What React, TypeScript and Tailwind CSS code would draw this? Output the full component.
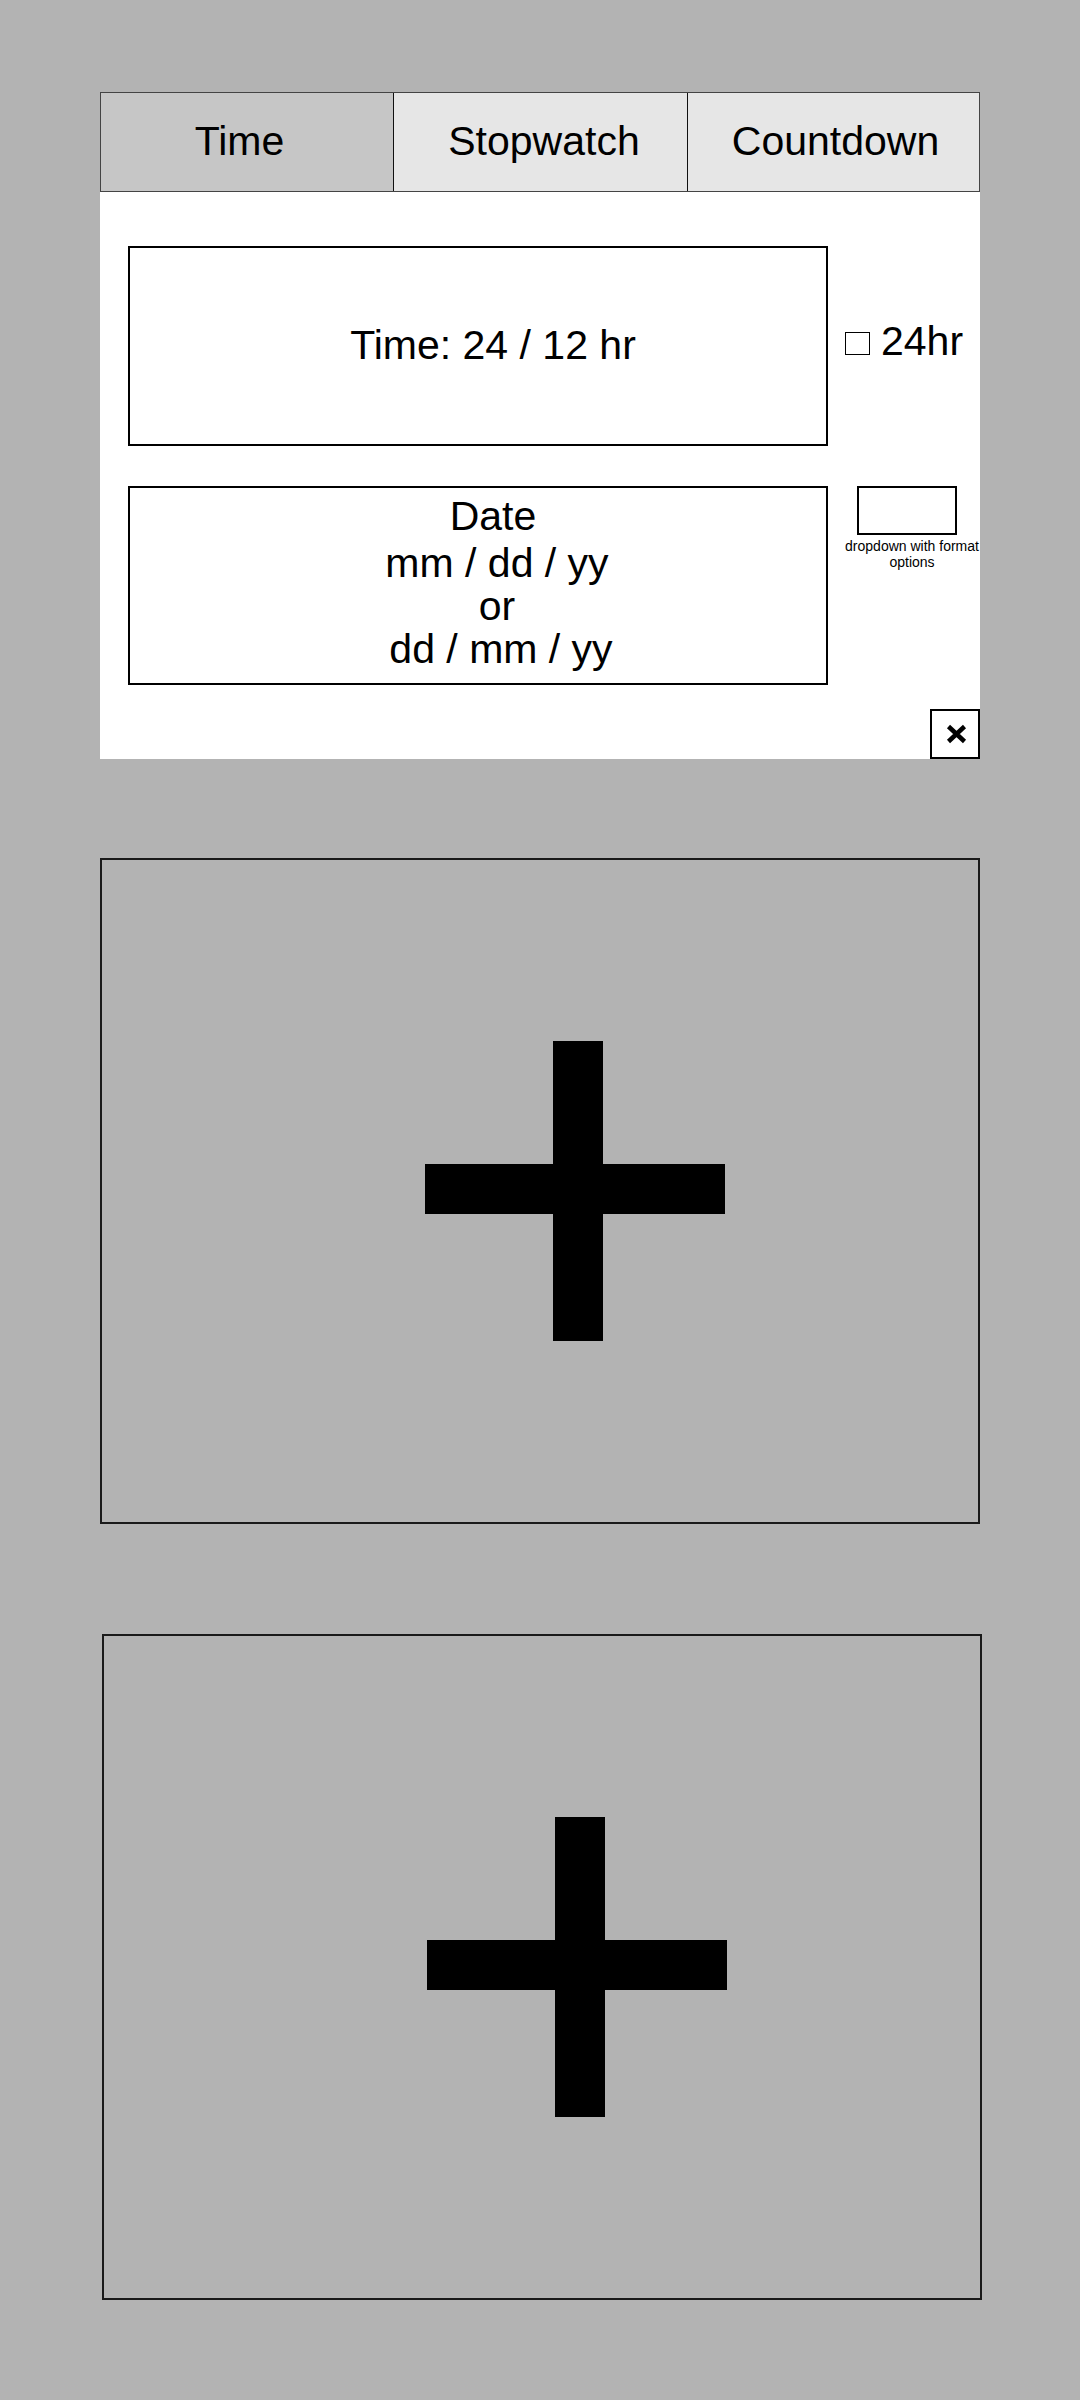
import React from "react";

function Plus() {
  return (
    <svg width="300" height="300" viewBox="0 0 300 300" className="block shrink-0">
      <rect x="128" y="0" width="50" height="300" fill="#000" />
      <rect x="0" y="123" width="300" height="50" fill="#000" />
    </svg>
  );
}

export default function App() {
  return (
    <div className="min-h-[2400px] w-[1080px] bg-[#b3b3b3] pt-[92px] font-['Liberation_Sans',Arial,sans-serif] text-black">
      {/* Top tabbed panel */}
      <div className="ml-[100px] w-[880px]">
        <div className="flex h-[100px] border border-[#444] text-[41px]">
          <div className="flex w-[293px] items-center justify-center border-r border-[#111] bg-[#c6c6c6] pr-[15px]">
            Time
          </div>
          <div className="flex w-[294px] items-center justify-center border-r border-[#111] bg-[#e6e6e6] pl-[7px]">
            Stopwatch
          </div>
          <div className="flex flex-1 items-center justify-center bg-[#e6e6e6] pl-[4px]">
            Countdown
          </div>
        </div>

        <div className="flex flex-col bg-white">
          <div className="mt-[54px] flex items-center">
            <div className="ml-[28px] flex h-[200px] w-[700px] items-center justify-center border-2 border-black pl-[30px] text-[41px]">
              Time: 24 / 12 hr
            </div>
            <div className="ml-[17px] flex items-baseline pb-[8px] text-[41px]">
              <span className="inline-block h-[23px] w-[25px] border border-black" />
              <span className="ml-[11px]">24hr</span>
            </div>
          </div>

          <div className="mt-[40px] flex items-start">
            <div className="ml-[28px] flex h-[199px] w-[700px] flex-col items-center justify-center border-2 border-black pl-[38px] pb-[6px] text-[41px] leading-[43px]">
              <div className="mb-[4px] pr-[8px]">Date</div>
              <div>mm / dd / yy</div>
              <div>or</div>
              <div className="pl-[8px]">dd / mm / yy</div>
            </div>
            <div className="ml-[16px] flex w-[136px] flex-col">
              <div className="ml-[13px] h-[49px] w-[100px] border-2 border-black" />
              <div className="mt-[3px] text-center text-[14px] leading-[16px]">
                dropdown with format
                <br />
                options
              </div>
            </div>
          </div>

          <div className="mt-[24px] flex justify-end">
            <button className="flex h-[50px] w-[50px] items-center justify-center border-2 border-black bg-white pl-[3px]">
              <svg width="21" height="20" viewBox="0 0 21 20">
                <path d="M2.5 2.5 L18.5 17.5 M18.5 2.5 L2.5 17.5" stroke="#000" strokeWidth="4.5" fill="none" />
              </svg>
            </button>
          </div>
        </div>
      </div>

      {/* Add panel 1 */}
      <div className="ml-[100px] mt-[99px] flex h-[666px] w-[880px] items-center justify-center border-2 border-[#1a1a1a] pl-[70px]">
        <Plus />
      </div>

      {/* Add panel 2 */}
      <div className="ml-[102px] mt-[110px] flex h-[666px] w-[880px] items-center justify-center border-2 border-[#1a1a1a] pl-[69px]">
        <Plus />
      </div>
    </div>
  );
}
